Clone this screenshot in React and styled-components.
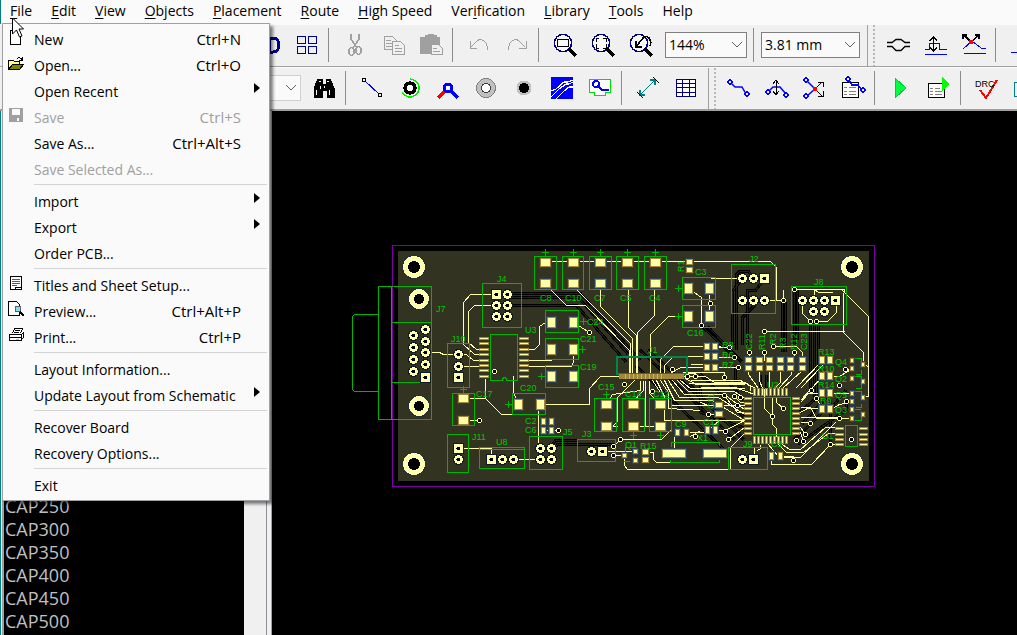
import React, { useState } from 'react'
import styled, { createGlobalStyle } from 'styled-components'

const GlobalStyle = createGlobalStyle`
  * {
    box-sizing: border-box;
  }
  body {
    margin: 0;
    background: #000;
    font-family: "Open Sans", "Noto Sans", sans-serif;
    font-size: 14px;
    color: #000;
  }
  button, select {
    font: inherit;
    color: inherit;
  }
`
const AppContainer = styled.div`
  position: relative;
  min-height: 100vh;
  display: flex;
  flex-direction: column;
  overflow: hidden;
`
const MenuBar = styled.nav`
  display: flex;
  align-items: center;
  height: 24px;
  padding-left: 1px;
  gap: 3px;
  background: #fafafa;
  border-left: 1px solid #008080;
`
const MenuTitle = styled.button`
  padding: 0 8px 2px;
  height: 24px;
  line-height: 20px;
  border: none;
  background: none;
  white-space: nowrap;
  u {
    text-underline-offset: 2px;
  }
`
const Toolbar = styled.div`
  display: flex;
  align-items: center;
  height: ${p => (p.$last ? 44 : 43)}px;
  padding-left: ${p => p.$start}px;
  background: #f0f0f0;
  border-top: 1px solid #fafafa;
  border-bottom: ${p => (p.$last ? 2 : 1)}px solid #a0a0a0;
  overflow: hidden;
`
const ToolButton = styled.button`
  flex: none;
  display: flex;
  align-items: center;
  justify-content: center;
  width: 38px;
  height: 36px;
  margin-bottom: 2px;
  padding: 0;
  border: none;
  background: none;
  svg {
    width: 24px;
    height: 24px;
    overflow: visible;
  }
`
const Separator = styled.div`
  flex: none;
  width: 1px;
  height: 34px;
  margin: 0 7px 2px 2px;
  background: #8c8c8c;
`
const Edge = styled.div`
  flex: none;
  width: 12px;
  height: 100%;
  margin-left: 3px;
  border-left: 1px solid #a0a0a0;
  background: radial-gradient(circle, #b8b8b8 1px, transparent 1px) 3px 3px / 6px 4px repeat-y;
`
const Combo = styled.label`
  position: relative;
  flex: none;
  width: ${p => p.$width}px;
  margin: 0 4px 2px ${p => p.$gap || 0}px;
  select {
    appearance: none;
    display: block;
    width: 100%;
    height: 26px;
    padding: 0 3px 1px;
    border: 1px solid ${p => (p.$pale ? '#d0d0d0' : '#808080')};
    border-radius: 0;
    background: #fafafa;
  }
  svg {
    position: absolute;
    right: 5px;
    top: 10px;
    width: 10px;
    height: 6px;
    pointer-events: none;
  }
`
const Workspace = styled.main`
  flex: 1;
  display: flex;
  min-height: 0;
`
const SidePanel = styled.aside`
  flex: none;
  display: flex;
  width: 272px;
  background: #f0f0f0;
  border-left: 1px solid #008080;
  border-right: 1px solid #a0a0a0;
`
const PatternList = styled.ul`
  flex: 1;
  display: flex;
  flex-direction: column;
  justify-content: flex-end;
  margin: 0 0 0 1px;
  padding: 0 0 2px 1px;
  list-style: none;
  background: #000;
  border-left: 2px solid #a0a0a0;
  color: #c0c0c0;
  font-size: 18px;
  line-height: 23px;
`
const ScrollTrack = styled.div`
  width: 23px;
  margin-right: 4px;
  border-right: 1px solid #8e8c98;
`
const Board = styled.div`
  flex: 1;
  display: flex;
  min-width: 0;
  background: #000;
  svg {
    width: 100%;
    height: 100%;
  }
  text {
    font-family: "Liberation Sans", sans-serif;
    font-size: 9px;
    fill: #00c800;
  }
`
const Menu = styled.div`
  position: absolute;
  top: 23px;
  left: 2px;
  width: 268px;
  padding: 3px 0 1px;
  background: #fafafa;
  border: 1px solid #a0a0a0;
  box-shadow: 3px 3px 3px rgba(0, 0, 0, 0.5);
`
const MenuRow = styled.button`
  display: flex;
  align-items: center;
  width: 100%;
  height: 26px;
  padding: 0 0 2px 5px;
  border: none;
  background: none;
  text-align: left;
  white-space: nowrap;
  color: #000;
  &:disabled {
    color: #a0a0a0;
  }
  &:hover:enabled {
    background: #e5f1fb;
  }
`
const MenuIcon = styled.span`
  flex: none;
  width: 16px;
  height: 20px;
  margin-right: 10px;
  svg {
    display: block;
    width: 16px;
    height: 16px;
    overflow: visible;
  }
`
const MenuLabel = styled.span`
  flex: 1;
`
const MenuKeys = styled.span`
  font-size: 15px;
`
const MenuEnd = styled.span`
  flex: none;
  width: 28px;
  height: 16px;
  padding-left: 13px;
  svg {
    display: block;
    width: 6px;
    height: 10px;
  }
`
const MenuRule = styled.hr`
  height: 1px;
  margin: 1px 2px 4px 31px;
  border: none;
  background: #d4d4d4;
`
const Cursor = styled.svg`
  position: absolute;
  left: 11px;
  top: 17px;
  width: 13px;
  height: 23px;
  pointer-events: none;
`

const Icon = ({ children, box = 24 }) => (
  <svg viewBox={`0 0 ${box} ${box}`} fill="none" stroke="#000" shapeRendering="crispEdges" aria-hidden="true">
    {children}
  </svg>
)

const Lens = ({ children }) => (
  <>
    <circle cx="10" cy="10" r="8.5" stroke="#000080" strokeWidth="1.4" fill="#f8f8f8" />
    <path d="M16 16l7 7" strokeWidth="3.5" />
    {children}
  </>
)
const Dot = ({ x, y, c = '#0000ff' }) => (
  <circle cx={x} cy={y} r="2" stroke={c} strokeWidth="1.4" fill="#f0f0f0" />
)

const tools = {
  letter: <path d="M12 5h4c8 0 8 14 0 14h-4z" stroke="#000090" strokeWidth="3" />,
  windows: <path d="M2.5 3.5h8v7h-8zM13.5 3.5h8v7h-8zM2.5 13.5h8v7h-8zM13.5 13.5h8v7h-8z" stroke="#000090" />,
  cut: (
    <g stroke="#a0a0a0" strokeWidth="1.5">
      <path d="M8 1v5l6 9M16 1v5l-6 9" />
      <ellipse cx="8.5" cy="18.5" rx="2.5" ry="4" />
      <ellipse cx="15.5" cy="17.5" rx="2.5" ry="4" />
    </g>
  ),
  copy: (
    <g stroke="#a0a0a0" fill="#f0f0f0">
      <path d="M3.5 3.5h8l4 4v9h-12zM5 7h5M5 10h6M5 13h6" />
      <path d="M11.5 8.5h8l4 4v9h-12zM13.5 12.5h4M13.5 15.5h7M13.5 18.5h7" />
    </g>
  ),
  paste: (
    <g stroke="#a0a0a0">
      <path d="M1.5 4.5h5v-2h3v-1h5v1h3v2h3v16h-19z" fill="#a0a0a0" />
      <path d="M12.5 11.5h7l4 4v6h-11zM14 15.5h4M14 18.5h7" fill="#f0f0f0" />
    </g>
  ),
  undo: <path d="M3 8v7h7M4 14l6-6q3-3 7 0q4 3 3 9" stroke="#a0a0a0" />,
  redo: <path d="M21 8v7h-7M20 14l-6-6q-3-3-7 0q-4 3-3 9" stroke="#a0a0a0" />,
  zoomRect: <Lens><path d="M4.5 6.5h11v7h-11z" /></Lens>,
  zoomAll: <Lens><path d="M5 9V5h3M12 5h3v4M5 11v4h3M12 15h3v-4" /></Lens>,
  zoomBack: <Lens><path d="M7 8v6h6M7 14l7-9q3-3 6 0q3 4 1 8" strokeWidth="1.6" /></Lens>,
  bridge: <path d="M1 9.5h5l4-3h5l4 3h5M1 13.5h5l4 4h5l4-4h5" shapeRendering="auto" strokeWidth="1.3" />,
  raise: (
    <>
      <path d="M1 16.5h4.5v-6h10v6h7M1 21.5h22" stroke="#0000ff" />
      <path d="M9.500 5v12M6 8l3.500-4L13 8M6 14l3.500 4 3.500-4" strokeWidth="1.400" />
    </>
  ),
  crossRoute: (
    <>
      <path d="M1 16l9-8 9 7h5M2 20.500h22" stroke="#0000ff" />
      <path d="M2 2l7 7L17 2M1 6V2h4M13 2h4v4" strokeWidth="1.500" />
      <circle cx="9" cy="9" r="2" fill="red" stroke="red" />
    </>
  ),
  cutoff: <path d="M1 19.500h20" stroke="#0000ff" />,
  find: (
    <g fill="#000">
      <path d="M2 21v-9l4-9h4v5h4V3h4l4 9v9h-7v-7h-5v7z" />
      <path d="M7 5h2M15 5h2M4 14v5M17 14v5M8 10v3M12 10v2" stroke="#fff" />
    </g>
  ),
  line: (
    <>
      <path d="M4 4l16 15" stroke="#0000ff" />
      <circle cx="4" cy="4" r="2" fill="#f0f0f0" />
      <circle cx="20" cy="19" r="2" fill="#f0f0f0" />
    </>
  ),
  ring: (
    <>
      <circle cx="12" cy="12" r="5" strokeWidth="3.5" fill="#fff" />
      <path d="M12 3a9 9 0 1 1-8 13" stroke="#00f000" strokeWidth="1.4" />
    </>
  ),
  joint: (
    <>
      <path d="M2 22l7-7" stroke="red" strokeWidth="3" />
      <path d="M15 15l7 7" stroke="#0000ff" strokeWidth="3" />
      <circle cx="12" cy="12" r="4" stroke="#0000ff" strokeWidth="3" fill="#fff" />
    </>
  ),
  pad: (
    <>
      <circle cx="12" cy="12" r="9.5" fill="#c0c0c0" stroke="#808080" />
      <circle cx="12" cy="12" r="4.5" fill="#fff" stroke="#404040" />
    </>
  ),
  hole: (
    <>
      <circle cx="12" cy="12" r="7.5" fill="#c0c0c0" stroke="none" />
      <circle cx="12" cy="12" r="5" fill="#000" stroke="none" />
    </>
  ),
  pour: (
    <>
      <path d="M1 1h22v22H1z" fill="#0000ff" stroke="none" />
      <path d="M1 15l5-2 8-7h4l5-2M1 21l8-8 7-5h3l4-2M6 23l8-8 5-4h4" stroke="#fff" strokeWidth="1.2" />
    </>
  ),
  poly: (
    <>
      <path d="M1.5 3.5h21v13h-5v3h-11v-3h-5z" stroke="#00e000" strokeWidth="1.5" fill="#fff" />
      <path d="M10 10l4 4h7" stroke="#0000ff" strokeWidth="2" />
      <circle cx="8" cy="8" r="3" stroke="#0000ff" strokeWidth="2" />
    </>
  ),
  measure: (
    <>
      <path d="M4 19L19 4M4 14v5h5M14 4h5v5" stroke="#008080" strokeWidth="1.4" />
      <path d="M1 16l6 6M17 1l6 6" />
    </>
  ),
  table: (
    <path d="M2.5 3.5h19v17h-19zM8.5 3.5v17M15.5 3.5v17M2.5 7.5h19M2.5 11.5h19M2.5 16.5h19" stroke="#000080" fill="#fff" />
  ),
  route: (
    <>
      <path d="M4 7l4 4h7l4 7" stroke="#0000ff" strokeWidth="1.5" shapeRendering="auto" />
      <Dot x={3} y={6} />
      <Dot x={20} y={18} />
    </>
  ),
  routeMove: (
    <>
      <path d="M3 16l5-5h7l6 7" stroke="#0000ff" strokeWidth="1.5" shapeRendering="auto" />
      <path d="M11 5v14M8 8l3-4 3 4M8 15l3 4 3-4" />
      <Dot x={3} y={16} />
      <Dot x={21} y={19} />
    </>
  ),
  routeCross: (
    <>
      <path d="M4 5l8 8-8 7" stroke="#0000ff" strokeWidth="1.500" shapeRendering="auto" />
      <path d="M12 13l7-7M12 13l7 7M15 6h5v5M15 20h5v-5" />
      <circle cx="12" cy="13" r="2" fill="red" stroke="red" />
      <Dot x={3} y={4} />
      <Dot x={3} y={20} />
    </>
  ),
  routeList: (
    <>
      <path d="M1.5 6.5h16v15h-16z" fill="#fff" />
      <path d="M3 11h3M8 11h7M3 15h3M8 15h7M3 18h3M8 18h7" stroke="#808080" />
      <path d="M7 3l4 6h6l4 5" stroke="#0000ff" strokeWidth="1.5" />
      <Dot x={7} y={3} />
      <Dot x={22} y={14} />
    </>
  ),
  run: <path d="M6 2l11 10L6 22z" fill="#00ff40" stroke="#00c840" />,
  runList: (
    <>
      <path d="M1.5 7.5h16v14h-16z" fill="#fff" />
      <path d="M3 12h3M8 12h5M3 15h3M8 15h7M3 18h3M8 18h7" stroke="#808080" />
      <path d="M15 1l8 7-8 7z" fill="#00ff00" stroke="none" />
    </>
  ),
  drc: (
    <>
      <path d="M5 14l6 8L22 4" stroke="red" strokeWidth="2" />
      <text x="0" y="11" fill="#000" stroke="none" fontFamily="Liberation Sans, sans-serif" fontSize="9">DRC</text>
    </>
  ),
  report: <path d="M1.5 6.5h16v14h-16zM4 11h10M4 15h10" stroke="#008080" />,
}

const files = {
  new: <path d="M2.5 1.5h6l4 4v10h-10z" fill="#fff" />,
  open: (
    <>
      <path d="M.5 14.5v-9h5l1 1h5v3" fill="#ffff80" />
      <path d="M.5 14.5l4-5h11l-4 5z" fill="#808000" />
      <path d="M9 4q3-3 5 1M14 2v3h-3" />
    </>
  ),
  save: (
    <>
      <path d="M1 1h14v14H1z" fill="#a0a0a0" stroke="none" />
      <path d="M4 2h8v6H4zM9 11h2v3H9z" fill="#fafafa" stroke="none" />
    </>
  ),
  sheet: (
    <>
      <path d="M2.5 1.5h11v13h-11z" fill="#fff" />
      <path d="M4 4.5h8M4 6.5h8M4 8.5h8M4 10.5h5" stroke="#008080" />
      <path d="M7 14.500v-2h6" />
    </>
  ),
  preview: (
    <>
      <path d="M.5.5h8l3 3v11H.5z" fill="#fff" />
      <circle cx="10" cy="8" r="3" fill="#80e0e8" stroke="#606060" />
      <path d="M12 11l4 4" strokeWidth="2" />
    </>
  ),
  print: (
    <>
      <path d="M4.5 6.5l2-5h8l-2 5M1.5 7.5h12v6h-12zM13.5 7.5l2-2v5l-2 2M7 3h5M6 5h5M2 10h11" fill="#fff" />
      <path d="M8 12h3" stroke="#d0d000" />
    </>
  ),
}

const titles = [
  ['', 'F', 'ile'], ['', 'E', 'dit'], ['', 'V', 'iew'], ['', 'O', 'bjects'], ['', 'P', 'lacement'],
  ['', 'R', 'oute'], ['', 'H', 'igh Speed'], ['Ver', 'i', 'fication'], ['', 'L', 'ibrary'], ['', 'T', 'ools'], ['Help', '', ''],
]

const fileMenu = [
  { label: 'New', keys: 'Ctrl+N', icon: 'new' },
  { label: 'Open...', keys: 'Ctrl+O', icon: 'open' },
  { label: 'Open Recent', more: true },
  { label: 'Save', keys: 'Ctrl+S', icon: 'save', off: true },
  { label: 'Save As...', keys: 'Ctrl+Alt+S' },
  { label: 'Save Selected As...', off: true },
  null,
  { label: 'Import', more: true },
  { label: 'Export', more: true },
  { label: 'Order PCB...' },
  null,
  { label: 'Titles and Sheet Setup...', icon: 'sheet' },
  { label: 'Preview...', keys: 'Ctrl+Alt+P', icon: 'preview' },
  { label: 'Print...', keys: 'Ctrl+P', icon: 'print' },
  null,
  { label: 'Layout Information...' },
  { label: 'Update Layout from Schematic', more: true },
  null,
  { label: 'Recover Board' },
  { label: 'Recovery Options...' },
  null,
  { label: 'Exit' },
]

const patterns = ['CAP250', 'CAP300', 'CAP350', 'CAP400', 'CAP450', 'CAP500']

// board data: outlines [x, y, w, h]
const outlines = [
  [378, 286, 53, 133], [482, 283, 39, 44], [447, 343, 22, 44], [452, 393, 22, 32], [447, 434, 21, 38],
  [479, 447, 45, 21], [512, 393, 33, 21], [534, 256, 22, 33], [562, 256, 21, 33], [589, 256, 22, 33],
  [616, 256, 22, 33], [644, 256, 22, 33], [545, 310, 33, 22], [545, 338, 33, 21], [545, 365, 33, 22],
  [682, 277, 33, 22], [682, 305, 33, 22], [594, 398, 22, 33], [622, 398, 22, 33], [649, 398, 22, 33],
  [529, 436, 33, 33], [577, 439, 38, 22], [731, 264, 44, 49], [791, 286, 55, 38], [753, 397, 37, 37],
  [845, 425, 12, 21], [728, 447, 39, 22],
]
// round pads, then square ones
const roundPads = [
  [413, 335], [413, 347], [413, 359], [413, 371], [425, 329], [425, 341], [425, 352], [425, 364],
  [507, 294], [496, 305], [507, 305], [496, 316], [507, 316], [458, 354], [458, 366], [458, 459],
  [502, 459], [513, 459], [540, 448], [551, 448], [540, 459], [551, 459], [591, 451], [742, 278],
  [753, 278], [742, 300], [753, 300], [764, 300], [802, 300], [813, 300], [824, 300], [813, 311],
  [824, 311], [742, 459],
]
const squarePads = [[425, 377], [496, 294], [458, 377], [458, 448], [491, 459], [602, 451], [764, 278], [835, 300], [753, 459]]
// surface pads [cx, cy, w, h]
const chips = [
  [463, 398, 11, 9], [463, 420, 11, 9], [518, 404, 9, 11], [540, 404, 9, 11],
  ...[545, 573, 600, 627, 655].flatMap(x => [[x, 262, 11, 9], [x, 283, 11, 9]]),
  ...[322, 349, 376].flatMap(y => [[551, y, 9, 11], [573, y, 9, 11]]),
  ...[288, 316].flatMap(y => [[688, y, 9, 11], [709, y, 9, 11]]),
  ...[606, 633, 660].flatMap(x => [[x, 404, 11, 9], [x, 426, 11, 9]]),
  [689, 262, 7, 6], [689, 270, 7, 6], [543, 421, 5, 7], [551, 421, 5, 7], [543, 430, 5, 7], [551, 430, 5, 7],
  [624, 455, 5, 5], [635, 451, 5, 5], [635, 460, 5, 5], [645, 452, 7, 6], [645, 460, 7, 6],
  [677, 432, 5, 7], [686, 432, 5, 7], [674, 453, 24, 9], [715, 453, 24, 9],
  ...[346, 356, 367].flatMap(y => [[707, y, 6, 7], [715, y, 6, 7]]),
  ...[748, 759, 769, 780, 790, 802].flatMap(x => [[x, 360, 7, 6], [x, 368, 7, 6]]),
  ...[360, 376, 393, 409].flatMap(y => [[822, y, 6, 8], [830, y, 6, 8]]),
  ...[360, 368, 378, 393, 401, 409, 418].map(y => [852, y, 4, 5]),
  ...[364, 381, 397, 414].map(y => [863, y, 4, 5]),
  [771, 456, 5, 8], [780, 456, 5, 8], [719, 405, 8, 6], [719, 414, 8, 6], [707, 430, 5, 8], [715, 430, 5, 8],
]
const pins = [
  ...[0, 1, 2, 3, 4, 5, 6, 7].flatMap(i => [[479, 337 + Math.round(i * 5.4), 10, 3], [519, 337 + Math.round(i * 5.4), 10, 3]]),
  ...[0, 1, 2, 3, 4, 5, 6, 7].flatMap(i => [[744, 397 + i * 5, 8, 3], [792, 397 + i * 5, 8, 3]]),
  ...[0, 1, 2, 3, 4, 5, 6, 7, 8].flatMap(i => [[753 + i * 4, 388, 3, 8], [753 + i * 4, 436, 3, 8]]),
  ...[427, 433, 438, 443].flatMap(y => [[835, y, 9, 3], [859, y, 9, 3]]),
]
const vias = [
  [479, 420], [589, 332], [558, 430], [613, 446], [613, 455], [620, 439], [624, 384], [652, 391], [695, 436],
  [783, 300], [794, 289], [764, 331], [749, 352], [764, 352], [773, 346], [794, 352], [810, 321], [816, 321],
  [701, 325], [710, 303], [729, 347], [734, 357], [738, 367], [772, 416], [783, 408], [810, 423], [724, 377],
  [734, 396], [740, 397], [724, 395], [737, 405], [725, 431], [728, 439], [708, 414], [793, 460], [805, 434],
  [796, 440], [803, 441], [811, 390], [816, 398], [839, 385], [839, 418], [830, 444], [851, 439], [846, 401],
  [845, 369], [672, 369], [687, 376], [695, 376], [494, 371],
]
const labels = [
  ['J7', 436, 312], ['J4', 497, 282], ['J10', 451, 342], ['U3', 525, 333], ['C17', 476, 397], ['J11', 472, 440],
  ['U8', 496, 445], ['C20', 520, 391], ['C8', 540, 301], ['C10', 565, 301], ['C7', 594, 301], ['C5', 620, 301],
  ['C4', 649, 301], ['C24', 587, 325], ['C21', 580, 342], ['C19', 580, 370], ['J1', 648, 353], ['C3', 695, 275],
  ['C16', 687, 336], ['C15', 598, 390], ['C14', 625, 397], ['C12', 653, 397], ['C2', 525, 424], ['C6', 525, 433],
  ['J5', 563, 435], ['J3', 582, 437], ['Q1', 625, 448], ['R15', 640, 449], ['C9', 675, 427], ['X1', 697, 441],
  ['J2', 749, 262], ['J8', 814, 285], ['R8', 722, 348], ['R6', 722, 358], ['R7', 722, 368], ['R13', 818, 355],
  ['R10', 818, 372], ['R14', 818, 388], ['R9', 820, 404], ['Q4', 835, 365], ['Q2', 835, 382], ['Q5', 835, 398],
  ['Q3', 835, 413], ['U2', 767, 388], ['U1', 822, 439], ['J9', 743, 447], ['C1', 771, 447], ['C13', 703, 425],
]
const upLabels = [['R1', 684, 272], ['C22', 752, 350], ['R11', 765, 350], ['R2', 776, 345], ['R3', 786, 349], ['R12', 797, 350], ['C23', 807, 350], ['C11', 714, 409]]
const plus = [
  [463, 389], [508, 404], [545, 252], [573, 252], [600, 252], [627, 252], [655, 252], [583, 321], [582, 349],
  [541, 376], [678, 288], [678, 316], [606, 394], [633, 435], [660, 435],
]

const darkTraces = `
  M510 293H580L640 360M510 297H578L628 354M510 305H576L626 362M640 350L735 440M648 350L740 434M636 366L730 455
  M732 345V292L739 283V278M736 350V275L740 271H748L754 278M742 345V318L754 306V300M747 345V290H756L765 278
  M782 300V352M785 302V352M794 289V350M797 289V340M810 321V392M814 321V398M818 321V400
  M550 448L556 440H578M551 452L558 444H615M703 327L734 357M708 327L742 362
  M724 377L744 400M700 374L744 417M690 385L744 440M700 385V412L744 428M735 366V380L744 392
  M794 440L830 405V400M798 444L846 410V401M830 444V410L846 390M760 375V388M766 375V388M820 395L800 412M826 398L802 424
`
const copperTraces = `
  M496 294H470L463 302V344L474 354H482M496 305H474L468 311V342L476 349H482M425 352H439L443 354H466L473 360H482
  M458 366H479M545 261H770L776 267V299M765 300H783M710 278H743M600 284V306L632 338V373M654 284V315L637 332V373
  M628 284V327L636 335V373M688 316H668L650 334V373M720 346H673L660 359V373M463 398H485V378M485 398L501 414H518
  M463 420H479M520 349H534L539 344V326L545 322H551M520 360H551M520 366H571L573 361V349M573 322L589 332
  M513 375V392L518 404M540 404H589V388L600 376H622M538 404V448M543 430H558M458 448H491V459M513 459H540M602 451H635
  M606 404L612 394L640 390V380M633 404L637 396L643 390V380M660 404L649 393V380M612 426L617 421V397L623 391L634 380
  M606 426H617M633 426H660M645 380V426M671 405H744M613 446L620 439H661L671 429V416M624 455V465L627 469H730V447L744 433
  M645 452H653V459L656 462H700M674 453V432M686 432H705L719 420M613 455H624
  M688 288L701 297V325M709 288V316M700 346H690M707 356H673L664 365V373M707 367H680L670 373
  M685 378L696 384H744M680 380L690 388H744M677 380L688 391H734L744 398M672 380L684 394H724L744 409M668 380L679 397H718L744 414
  M664 380L674 400H712L744 420M660 380L668 392V408L700 410M656 380L664 396V420H744M652 380L660 392M690 364H707
  M682 376H705L714 382H745L750 386V390M682 372H724V377M690 380H740L755 388M684 374L700 372M700 387H735L754 394M688 383H745
  M794 289H844V292M764 331H844M783 300V289M794 289H841L868 316V396L863 397M843 292V332L863 352V364M802 300V313L810 321M814 300V289L818 292H832
  M816 321H827L836 312V300M773 346H796L802 352V360M749 352V360M764 352V360M794 352V360M729 347H715M734 357H715M738 367H715
  M759 368V380L762 388M769 368V388M780 368V382L774 388M791 368V374L778 388M748 368V374L758 388M802 370L782 388
  M822 360L795 388M822 365L800 388M822 376L800 400M830 376H839L852 368M822 393H808L800 402M816 398L822 409M830 393H852
  M852 401L839 404L830 409M800 407H810L816 418H852M800 412L807 408H822M800 417H839M800 422H810M800 427L805 434M800 432L803 441
  M764 388V408L772 416V424L776 428V436M772 416V397M783 408L776 402V397M754 447V459M760 444V448L757 450
  M782 444L789 449H800L825 427H835M778 444L786 452H803L828 433H835M830 444H835M830 444L811 464H771V456M780 456H793V460
  M700 430L690 436M715 430H725L744 420M719 414H708M728 439L744 427M744 402H740L734 396M744 412H737L724 395M719 405H708L700 402
  M845 369H852M863 364L868 366M846 401H852
`

function ToolIcon({ name }) {
  return (
    <ToolButton type="button" aria-label={name}>
      <Icon>{tools[name]}</Icon>
    </ToolButton>
  )
}

function Picker({ value, width, gap, pale, name }) {
  return (
    <Combo $width={width} $gap={gap} $pale={pale}>
      <select aria-label={name} defaultValue={value}>
        <option>{value}</option>
      </select>
      <svg viewBox="0 0 10 6" fill="none" stroke="#606060">
        <path d="M0 0l5 5 5-5" />
      </svg>
    </Combo>
  )
}

function Pcb() {
  return (
    <Board>
      <svg viewBox="272 111 745 524" fill="none" shapeRendering="crispEdges">
        <rect x="392.5" y="245.5" width="482" height="241" stroke="#7c00a8" />
        <rect x="398" y="251" width="471" height="230" rx="1" fill="#333322" />
        <path d={darkTraces} stroke="#000" strokeWidth="3" />
        <path d={darkTraces} stroke="#222218" strokeWidth="1" />
        <path d={copperTraces} stroke="#ffffa8" transform="translate(.5 .5)" />
        <path d="M577 290L630 343V373M551 290L566 305H585L629 350V373M768 444L779 457H801L836 422" stroke="#ffffa8" />
        {[[414, 267, 10], [852, 267, 10], [414, 464, 10], [852, 464, 10], [419, 299, 9], [419, 406, 9]].map(([x, y, r]) => (
          <g key={`${x}-${y}`}>
            <circle cx={x} cy={y} r={r + 2} fill="#203038" />
            <circle cx={x} cy={y} r={r + 1} fill="#ffffb0" />
            <circle cx={x} cy={y} r={r - 4} fill="#000" />
          </g>
        ))}
        {pins.map(([x, y, w, h]) => (
          <g key={`${x}-${y}`}>
            <rect x={x} y={y} width={w} height={h} fill="#a08838" />
            <rect x={x + 1} y={y + 1} width={w > h ? w - 2 : 1} height={w > h ? 1 : h - 2} fill="#ffffa8" />
          </g>
        ))}
        {chips.map(([cx, cy, w, h], i) => {
          const x = Math.ceil(cx - w / 2)
          const y = Math.ceil(cy - h / 2)
          return (
            <g key={i}>
              <rect x={x - 1} y={y - 1} width={w + 2} height={h + 2} fill="#2c4050" />
              <rect x={x} y={y} width={w} height={h} fill="#a08838" />
              <rect x={x + 1} y={y + 1} width={w - 2} height={h - 2} fill="#ffffa8" />
            </g>
          )
        })}
        <rect x="617" y="357" width="70" height="17" stroke="#008848" strokeWidth="2" />
        <rect x="619" y="374" width="65" height="5" fill="#a08838" />
        <path d="M625.5 374v5M629.5 374v5M633.5 374v5M637.5 374v5M641.5 374v5M645.5 374v5M649.5 374v5M653.5 374v5M657.5 374v5M661.5 374v5" stroke="#c8b868" />
        <g stroke="#00b400">
          {outlines.map(([x, y, w, h]) => (
            <rect key={`${x}-${y}`} x={x + 0.5} y={y + 0.5} width={w} height={h} />
          ))}
          <path d="M378.5 314.5H354.5L352.5 316.5V389.5L354.5 391.5H378.5M391.5 286v133M392 322.5h39M392 382.5h39M480 449.5h44" />
          <path d="M490.5 334.5h27v46h-11v-2l-2-1-2 1v2h-12z" />
          <path d="M671 446.5v-3.5M670.5 442.5h49v3M670.5 460v2.5h49v-3M634 447.5h-9v4M624 461.5h6M855 358.5h6v5M861 370v4.5h-5M855 376.5h6v4M861 384v4.5h-5M855 391.5h6v4M861 404v3.5h-5M855 409.5h6M855 420.5h6v-4" />
          {plus.map(([x, y]) => (
            <path key={`${x}-${y}`} d={`M${x - 3} ${y}.5h7M${x}.5 ${y - 3}v7`} />
          ))}
        </g>
        {roundPads.map(([x, y]) => (
          <g key={`${x}-${y}`}>
            <circle cx={x + 0.5} cy={y + 0.5} r="5.5" fill="#101c24" />
            <circle cx={x + 0.5} cy={y + 0.5} r="4.3" fill="#ffffb0" />
            <circle cx={x + 0.5} cy={y + 0.5} r="2" fill="#000" />
          </g>
        ))}
        {squarePads.map(([x, y]) => (
          <g key={`${x}-${y}`}>
            <rect x={x - 5} y={y - 5} width="11" height="11" fill="#101c24" />
            <rect x={x - 4} y={y - 4} width="9" height="9" fill="#ffffb0" />
            <circle cx={x + 0.5} cy={y + 0.5} r="2" fill="#000" />
          </g>
        ))}
        {vias.map(([x, y]) => (
          <circle key={`${x}-${y}`} cx={x + 0.5} cy={y + 0.5} r="2" fill="#000" stroke="#ffffb0" />
        ))}
        {labels.map(([t, x, y]) => <text key={t} x={x} y={y}>{t}</text>)}
        {upLabels.map(([t, x, y]) => <text key={t} transform={`translate(${x} ${y}) rotate(-90)`}>{t}</text>)}
      </svg>
    </Board>
  )
}

function App() {
  const [menuOpen, setMenuOpen] = useState(true)

  return (
    <AppContainer>
      <GlobalStyle />
      <MenuBar>
        {titles.map(([before, key, after], i) => (
          <MenuTitle key={i} type="button" onClick={() => setMenuOpen(i === 0 && !menuOpen)}>
            {before}<u>{key}</u>{after}
          </MenuTitle>
        ))}
      </MenuBar>
      <Toolbar $start={250}>
        <ToolIcon name="letter" />
        <ToolIcon name="windows" />
        <Separator />
        <ToolIcon name="cut" />
        <ToolIcon name="copy" />
        <ToolIcon name="paste" />
        <Separator />
        <ToolIcon name="undo" />
        <ToolIcon name="redo" />
        <Separator />
        <ToolIcon name="zoomRect" />
        <ToolIcon name="zoomAll" />
        <ToolIcon name="zoomBack" />
        <Picker name="Zoom" value="144%" width={82} gap={5} />
        <Separator />
        <Picker name="Grid" value="3.81 mm" width={99} />
        <Edge />
        <ToolIcon name="bridge" />
        <ToolIcon name="raise" />
        <ToolIcon name="crossRoute" />
        <Separator />
        <ToolIcon name="cutoff" />
      </Toolbar>
      <Toolbar $last $start={161}>
        <Picker name="Component" value="" width={140} pale />
        <ToolIcon name="find" />
        <Separator />
        <ToolIcon name="line" />
        <ToolIcon name="ring" />
        <ToolIcon name="joint" />
        <ToolIcon name="pad" />
        <ToolIcon name="hole" />
        <ToolIcon name="pour" />
        <ToolIcon name="poly" />
        <Separator />
        <ToolIcon name="measure" />
        <ToolIcon name="table" />
        <Edge />
        <ToolIcon name="route" />
        <ToolIcon name="routeMove" />
        <ToolIcon name="routeCross" />
        <ToolIcon name="routeList" />
        <Separator />
        <ToolIcon name="run" />
        <ToolIcon name="runList" />
        <Separator />
        <ToolIcon name="drc" />
        <ToolIcon name="report" />
      </Toolbar>
      <Workspace>
        <SidePanel>
          <PatternList>
            {patterns.map(p => <li key={p}>{p}</li>)}
          </PatternList>
          <ScrollTrack />
        </SidePanel>
        <Pcb />
      </Workspace>
      {menuOpen && (
        <Menu>
          {fileMenu.map((item, i) => item ? (
            <MenuRow key={i} type="button" disabled={item.off}>
              <MenuIcon>{item.icon && <Icon box={16}>{files[item.icon]}</Icon>}</MenuIcon>
              <MenuLabel>{item.label}</MenuLabel>
              {item.keys && <MenuKeys>{item.keys}</MenuKeys>}
              <MenuEnd>
                {item.more && <svg viewBox="0 0 6 10"><path d="M0 0l6 5-6 5z" /></svg>}
              </MenuEnd>
            </MenuRow>
          ) : <MenuRule key={i} />)}
        </Menu>
      )}
      <Cursor viewBox="0 0 13 23">
        <path d="M1.5 1v16l4-4 3 7 2.5-1-3-7h4.5z" fill="#fff" stroke="#000" />
      </Cursor>
    </AppContainer>
  )
}

export default App
